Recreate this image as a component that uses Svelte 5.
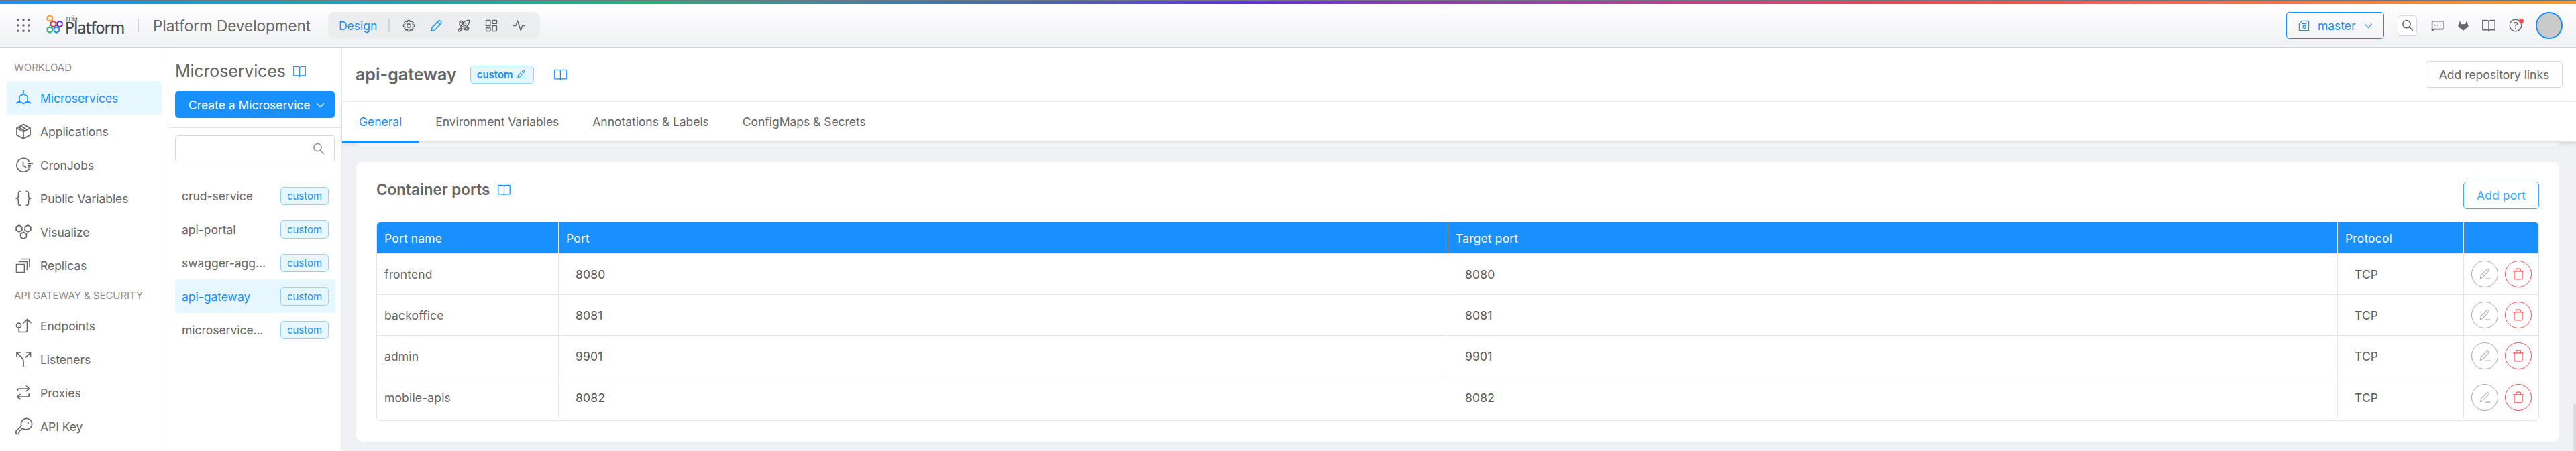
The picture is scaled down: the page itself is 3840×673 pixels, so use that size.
<script>
  const workload = [
    ['Microservices', 'micro'],
    ['Applications', 'box'],
    ['CronJobs', 'cron'],
    ['Public Variables', 'braces'],
    ['Visualize', 'hexes'],
    ['Replicas', 'replicas']
  ];
  const gateway = [
    ['Endpoints', 'endpoint'],
    ['Listeners', 'split'],
    ['Proxies', 'repeat'],
    ['API Key', 'key']
  ];
  const services = ['crud-service', 'api-portal', 'swagger-agg...', 'api-gateway', 'microservice...'];
  const selected = 'api-gateway';
  const tabs = ['General', 'Environment Variables', 'Annotations & Labels', 'ConfigMaps & Secrets'];
  const ports = [
    ['frontend', '8080'],
    ['backoffice', '8081'],
    ['admin', '9901'],
    ['mobile-apis', '8082']
  ];
  const tools = ['gear', 'pencil', 'rocket', 'dash', 'pulse'];
  const hex = (x, y, r) =>
    `M${x} ${y - r}L${x + r * 0.87} ${y - r / 2}V${y + r / 2}L${x} ${y + r}L${x - r * 0.87} ${y + r / 2}V${y - r / 2}Z`;
  const gearPath = (() => {
    let d = '';
    for (let i = 0; i < 8; i++) {
      const pts = [[-17, 7], [-10, 9.1], [10, 9.1], [17, 7]];
      for (const [off, r] of pts) {
        const a = ((i * 45 + off) * Math.PI) / 180;
        d += `${d ? 'L' : 'M'}${(12 + r * 1.14 * Math.sin(a)).toFixed(2)} ${(12 - r * 1.14 * Math.cos(a)).toFixed(2)}`;
      }
    }
    return d + 'Z';
  })();

  // Stroke icons on a 24-unit grid.
  const icons = {
    micro: hex(12, 13.5, 7) + 'M12 1V6.500M6 17L1 20M18 17L23 20',
    box: 'M12 1.500L22 7V17.500L12 23L2 17.500V7ZM2 7L12 12.500L22 7M12 12.500V23M8 3.800L17 9.500M4.800 5.600L13.500 10.900',
    cron: 'M20.500 7A10 10 0 1 0 20.500 17.500M11.500 6.500V13L16 15.500M18 9.800H26M18 12.500H23M18 15H22.500',
    braces: 'M8.500 1.500H7.500Q4.500 1.500 4.500 4.500V8.500Q4.500 12 1 12Q4.500 12 4.500 15.500V19.500Q4.500 22.500 7.500 22.500H8.500M15.500 1.500H16.500Q19.500 1.500 19.500 4.500V8.500Q19.500 12 23 12Q19.500 12 19.500 15.500V19.500Q19.500 22.500 16.500 22.500H15.500',
    hexes: hex(5.500, 7, 5) + hex(18.500, 7, 5) + hex(12, 17.200, 5),
    replicas: 'M1.500 10.500H13.500V22.500H1.500ZM5 6.500H17.500V19M9 2.500H21V15',
    endpoint: 'M5.200 13.500V19.500Q5.200 21.500 7.200 21.500H15.500Q17.500 21.500 17.500 19.500V2.500M11.500 8.500L17.500 2.500L23.500 8M8.500 11.700A3.500 3.500 0 1 1 1.500 11.700A3.500 3.500 0 1 1 8.500 11.700',
    split: 'M12 23V15Q12 12 9.500 9.700L2 2M2 8V2H8.500M16 2H22.500V8.500M22.500 2L15 9.500',
    repeat: 'M3 10V9Q3 6 6 6H20M16 1.500L20.500 6L16 10M20.500 13V15Q20.500 18 17.500 18H3.500M7.500 14L3 18L7.500 22',
    key: 'M9.500 15.500L8.500 15.800V18H6V20.500H5.200V23.500H1V19L8.800 11.500A8.200 8.200 0 1 1 16.500 16.800Q13.500 17 11.800 15.800ZM18.500 6.500h.6v.6h-.6z',
    gear: gearPath + 'M15.500 12A3.500 3.500 0 1 1 8.500 12A3.500 3.500 0 1 1 15.500 12',
    pencil: 'M2.500 21.500L4 15L16 3Q17.700 1.500 19.500 3L21 4.500Q22.500 6.300 21 8L9 20ZM14 5L19 10',
    rocket: 'M22.500 1.500Q15 1.500 10 7Q6.500 11.500 5.500 14.500L9.500 18.500Q14 17 17.500 13.500Q22.500 8.500 22.500 1.500ZM16 9.500A2.700 2.700 0 1 1 10.600 9.500A2.700 2.700 0 1 1 16 9.500M9.500 7.500L4 4.500V10.500L6.500 12.500M17 14.500L20 20H14L11.500 17.500M4 5Q5 2.500 8 3L11 6M20 19.500Q22 18 20.500 15L18 13M6 17Q2 17 1.500 22.500Q7 22.500 7 18.500ZM9 13L12.500 15.500',
    dash: 'M2 2H10V12H2ZM14 2H22V8H14ZM2 16H10V22H2ZM14 12H22V22H14Z',
    pulse: 'M1 12H6L9.500 2.500L15.500 21.500L18.500 12H23',
    book: 'M12 5.500Q11.500 3 8.500 3H1V20H9.500Q12 20 12 22.500Q12 20 14.500 20H23V3H15.500Q12.500 3 12 5.500V22',
    search: 'M17.500 9.500A7.500 7.500 0 1 1 2.500 9.500A7.500 7.500 0 1 1 17.500 9.500M15 15L22.500 22.500',
    down: 'M2 7L12 18L22 7',
    edit: 'M3 21L4.500 14.500L16.500 2.500Q18 1.500 19.500 3Q21 4.500 19.800 6L8 18.500ZM12.500 21.500H23.500',
    trash: 'M1.500 6.500H22.500M4 6.500V20.500Q4 22.500 6 22.500H18Q20 22.500 20 20.500V6.500M7.500 6V3.500Q7.500 1.500 9.500 1.500H14.500Q16.500 1.500 16.500 3.500V6',
    save: 'M8 2H22V22H2V8ZM8.500 8H16.500V2M16 14.500A3 3 0 1 1 10 14.500A3 3 0 1 1 16 14.500',
    chat: 'M2 3.500H22.500V18.500H6L2 22ZM6 11h2M11.200 11h2M16.500 11h2',
    help: 'M22.500 12A10.500 10.500 0 1 1 1.500 12A10.500 10.500 0 1 1 22.500 12M9 9.500Q9 6.500 12 6.500Q15 6.500 15 9.300Q15 11.200 12 12.200V14M12 16.500V18'
  };
</script>

{#snippet icon(name, size, weight = 1.8)}
  <svg class="icon" width={size} height={size} viewBox="0 0 24 24" fill="none" stroke="currentColor" stroke-width={weight} stroke-linejoin="round">
    <path d={icons[name]} />
  </svg>
{/snippet}

{#snippet navItem(label, glyph, active)}
  <a class="nav-item" class:active href="#top">{@render icon(glyph, 24, 1.7)}<span>{label}</span></a>
{/snippet}

<div class="page">
  <div class="edge"></div>
  <div class="rainbow"></div>
  <header>
    <svg class="dots" width="20" height="20" viewBox="0 0 20 20">
      {#each [1.800, 10, 18.200] as y}
        {#each [1.800, 10, 18.200] as x}<circle cx={x} cy={y} r="1.800" />{/each}
      {/each}
    </svg>
    <svg class="logo" width="120" height="32" viewBox="0 0 120 32">
      <g fill="none" stroke-width="1.900">
        <path stroke="#ff9933" d={hex(5.300, 5.500, 4.300)} />
        <path stroke="#eb3a45" d={hex(10.500, 14, 4.300)} />
        <path stroke="#6035d0" d={hex(20, 14, 4.300)} />
        <path stroke="#30b87c" d={hex(5.300, 22.500, 4.300)} />
        <path stroke="#1890ff" d={hex(15.300, 22.500, 4.300)} />
      </g>
      <text class="mia" x="29.500" y="8.500" textLength="17">mia</text>
      <text class="word" x="28" y="27.600" textLength="89">Platform</text>
    </svg>
    <i class="rule"></i>
    <span class="project">Platform Development</span>
    <nav class="tools">
      <span class="design">Design</span>
      <i class="bar"></i>
      {#each tools as t}
        <span class="tool" class:on={t === 'pencil'}>{@render icon(t, 19, 1.800)}</span>
      {/each}
    </nav>
    <div class="right">
      <button class="branch">{@render icon('save', 17, 1.700)}<span>master</span>{@render icon('down', 13, 2)}</button>
      <button class="find">{@render icon('search', 18, 2)}</button>
      <span class="slot chat">{@render icon('chat', 19, 2)}</span>
      <svg class="fox" width="16" height="15" viewBox="0 0 24 22"><path fill="currentColor" d="M4.500 0L7.500 7.500H16.500L19.500 0L23.500 11Q24 13 22 14.500L12 22L2 14.500Q0 13 .5 11Z" /></svg>
      <span class="slot bk">{@render icon('book', 20, 1.700)}</span>
      <span class="slot help">{@render icon('help', 20, 1.600)}<i class="alert"></i></span>
      <span class="avatar"></span>
    </div>
  </header>

  <div class="body">
    <aside class="side">
      <h6>WORKLOAD</h6>
      {#each workload as [label, glyph], i}{@render navItem(label, glyph, i === 0)}{/each}
      <h6 class="second">API GATEWAY &amp; SECURITY</h6>
      {#each gateway as [label, glyph]}{@render navItem(label, glyph, false)}{/each}
    </aside>

    <section class="list">
      <div class="top">
        <h2>Microservices <span class="blue">{@render icon('book', 19, 1.700)}</span></h2>
        <button class="create"><span>Create a Microservice</span>{@render icon('down', 13, 2.200)}</button>
      </div>
      <div class="search">{@render icon('search', 18, 1.900)}</div>
      <div class="services">
        {#each services as s}
          <div class="service" class:active={s === selected}><span>{s}</span><span class="tag">custom</span></div>
        {/each}
      </div>
    </section>

    <main>
      <div class="head">
        <h1>api-gateway</h1>
        <span class="tag big">custom {@render icon('edit', 14, 1.800)}</span>
        <span class="blue docs">{@render icon('book', 19, 1.700)}</span>
        <button class="repo">Add repository links</button>
      </div>
      <div class="tabs">
        {#each tabs as t, i}<span class="tab" class:active={i === 0}>{t}</span>{/each}
      </div>
      <div class="scroll">
        <div class="card prev"></div>
        <div class="card">
          <div class="card-head">
            <h3>Container ports</h3>
            <span class="blue">{@render icon('book', 19, 1.600)}</span>
            <button class="add">Add port</button>
          </div>
          <div class="table">
            <div class="row th"><span>Port name</span><span>Port</span><span>Target port</span><span>Protocol</span><span></span></div>
            {#each ports as [name, port]}
              <div class="row">
                <span>{name}</span><span class="val">{port}</span><span class="val">{port}</span><span class="val">TCP</span>
                <span class="acts"><button class="round">{@render icon('edit', 18, 1.400)}</button><button class="round red">{@render icon('trash', 18, 1.700)}</button></span>
              </div>
            {/each}
          </div>
        </div>
        <div class="thumb"></div>
      </div>
    </main>
  </div>
</div>

<style>
  :global(body) { margin: 0; overflow: hidden; }
  .page { width: 3840px; height: 673px; overflow: hidden; display: flex; flex-direction: column; font: 17.500px/27px Inter, sans-serif; letter-spacing: -.03px; color: #666; background: #fff; }
  .page * { box-sizing: border-box; }
  button { font: inherit; color: inherit; letter-spacing: inherit; background: #fff; padding: 0; display: flex; align-items: center; border: 1px solid #d9d9d9; border-radius: 5px; box-shadow: 0 2px 0 rgba(0, 0, 0, .02); }
  h1, h2, h3, h6 { margin: 0; font-weight: 400; }
  .icon { flex: none; display: block; overflow: visible; }
  .blue { color: #1890ff; display: flex; }
  .edge { height: 1px; background: #6e7780; }
  .rainbow { height: 5px; background: linear-gradient(90deg, #1890ff 0, #2bb07a 25%, #6035d8 48.500%, #f04a55 75%, #ff9a2e 100%); }
  header { height: 65px; flex: none; display: flex; align-items: center; padding: 0 20px 0 25px; background: linear-gradient(#fff, #f0f1f5); border-bottom: 1px solid #d3d3da; }
  .dots { fill: #666; }
  .logo { margin-left: 24px; flex: none; overflow: visible; letter-spacing: 0; }
  .mia { font: 11px "Open Sans", sans-serif; fill: #555c5e; }
  .word { font: 23px "Open Sans", sans-serif; fill: #3f4749; stroke: #3f4749; stroke-width: .4; }
  .rule { width: 1px; height: 20px; background: #d4d4d6; margin-left: 17px; }
  .project { font-size: 22.500px; margin-left: 21px; width: 261px; white-space: nowrap; }
  .tools { height: 40px; width: 316px; border-radius: 10px; background: #ecedef; display: flex; align-items: center; padding-left: 16px; }
  .design { width: 74px; color: #1890ff; }
  .bar { width: 3px; height: 20px; background: #d4d4d4; border-radius: 2px; margin-right: 18px; }
  .tool { width: 41.300px; display: flex; }
  .tool.on { color: #1890ff; }
  .right { margin-left: auto; display: flex; align-items: center; }
  .branch { width: 146px; height: 40px; color: #1890ff; border-color: #1890ff; background: transparent; padding-left: 17px; }
  .branch span { margin-left: 12px; width: 69px; text-align: left; }
  .find { width: 29px; height: 30px; margin-left: 20px; justify-content: center; }
  .slot { display: flex; position: relative; }
  .chat { margin-left: 21px; }
  .fox { margin-left: 21px; }
  .bk { margin-left: 20px; }
  .help { margin-left: 20px; }
  .alert { position: absolute; right: -2px; top: 0; width: 7px; height: 7px; border-radius: 50%; background: #ff4d4f; }
  .avatar { width: 40px; height: 40px; margin-left: 20px; border-radius: 50%; border: 2px solid #1890ff; background: #cacaca; }
  .body { flex: 1; display: flex; min-height: 0; }
  .side { width: 251px; flex: none; border-right: 1px solid #ececf0; padding: 15px 9px 0 10px; overflow: hidden; }
  h6 { font-size: 15px; line-height: 30px; height: 35px; padding-left: 11px; color: #8c8c8c; }
  h6.second { height: 40px; line-height: 40px; }
  .nav-item { display: flex; align-items: center; height: 50px; padding-left: 13px; border-radius: 5px; color: inherit; text-decoration: none; }
  .nav-item span { margin-left: 13px; }
  .active { color: #1890ff; background: #e6f7ff; }
  .list { width: 259px; flex: none; border-right: 1px solid #ececf0; }
  .top { height: 120px; padding: 15px 10px 0; border-bottom: 1px solid #e6e6e6; }
  h2 { font-size: 25px; letter-spacing: -.15px; line-height: 40px; height: 50px; display: flex; }
  h2 .blue { margin: 11px 0 0 11px; }
  .create { width: 238px; height: 40px; color: #fff; background: #1890ff; border: 0; padding-left: 20px; }
  .create span { width: 190px; text-align: left; white-space: nowrap; }
  .search { height: 40px; margin: 11px 10px 0; border: 1px solid #d9d9d9; border-radius: 5px; display: flex; align-items: center; justify-content: flex-end; padding-right: 14px; color: #8c8c8c; }
  .services { padding: 25px 9px 0 10px; }
  .service { height: 50px; display: flex; align-items: center; justify-content: space-between; padding: 0 10px; border-radius: 5px; }
  .tag { height: 27px; padding: 0 9px; font-size: 15px; line-height: 25px; color: #1890ff; background: #e6f7ff; border: 1px solid #91d5ff; border-radius: 5px; }
  main { flex: 1; display: flex; flex-direction: column; min-width: 0; }
  .head { height: 81px; flex: none; display: flex; align-items: center; padding: 0 20px; border-bottom: 1px solid #f0f0f0; }
  h1 { font-size: 25px; font-weight: 600; letter-spacing: 0; }
  .big { margin-left: 20px; width: 95px; font-weight: 600; display: flex; align-items: center; gap: 6px; white-space: nowrap; }
  .docs { margin-left: 30px; }
  .repo { margin-left: auto; width: 204px; height: 40px; justify-content: center; white-space: nowrap; }
  .tabs { height: 60px; flex: none; display: flex; border-bottom: 1px solid #e4e4e6; position: relative; z-index: 1; box-shadow: 0 2px 7px rgba(0, 0, 0, .13); }
  .tab { padding: 0 25px; line-height: 60px; height: 61px; }
  .tab.active { background: none; border-bottom: 3px solid #1890ff; }
  .scroll { flex: 1; min-height: 0; background: #f0f1f5; position: relative; padding: 0 25px 0 21px; }
  .card { height: 418px; background: #fff; border-radius: 9px; padding: 30px; }
  .prev { height: 6px; border-radius: 0 0 9px 9px; padding: 0; margin-bottom: 23px; }
  .card-head { display: flex; height: 60px; }
  h3 { font-size: 22.500px; line-height: 24px; font-weight: 600; margin-right: 12px; }
  .card-head .blue { margin-top: 3px; height: 20px; }
  .add { margin-left: auto; width: 113px; height: 41px; justify-content: center; color: #40a9ff; border-color: #40a9ff; letter-spacing: .1px; }
  .table { height: 297px; border: 1px solid #e6e6e6; border-radius: 6px; overflow: hidden; letter-spacing: .15px; }
  .row { display: grid; grid-template-columns: 271px 1326px 1326px 188px 1fr; height: 61.200px; border-bottom: 1px solid #e8e8e8; }
  .row > span { display: flex; align-items: center; padding-left: 11px; border-right: 1px solid #e6e6e6; }
  .row > span:last-child { border-right: 0; }
  .row:last-child { border-bottom: 0; }
  .row > .val { padding-left: 25px; color: #595959; }
  .row.th { height: 47px; background: #1890ff; color: #fff; }
  .row > .acts { gap: 10px; padding-left: 11px; }
  .round { width: 40px; height: 40px; border-radius: 50%; justify-content: center; color: #aaa; border-color: #aaa; }
  .red { color: #ff4d4f; border-color: #ff4d4f; }
  .thumb { position: absolute; right: 0; top: 390px; width: 4px; height: 80px; background: #dcdcdc; border-radius: 4px 4px 0 0; }
</style>
